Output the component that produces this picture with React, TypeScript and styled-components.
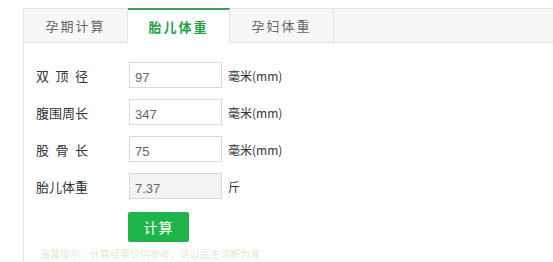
import React from "react";
import styled, { createGlobalStyle } from "styled-components";

const GlobalStyle = createGlobalStyle`
  html, body {
    margin: 0;
    padding: 0;
    background: #fff;
    overflow: hidden;
  }
  body {
    font-family: "Noto Sans CJK SC", "Liberation Sans", sans-serif;
  }
`;

const Page = styled.div`
  width: 553px;
  height: 262px;
  padding: 8px 0 0 23px;
  box-sizing: border-box;
  overflow: hidden;
`;

const Panel = styled.div`
  width: 560px;
  border-left: 1px solid #e6e6e6;
  min-height: 260px;
`;

const TabBar = styled.div`
  display: flex;
  height: 35px;
  background: #f7f7f7;
  border-top: 1px solid #e4e4e4;
  border-bottom: 1px solid #e4e4e4;
  box-sizing: border-box;
`;

const Tab = styled.div<{ $active?: boolean }>`
  width: ${(p) => (p.$active ? "102px" : "104px")};
  display: flex;
  align-items: center;
  justify-content: center;
  font-size: 13px;
  letter-spacing: 2px;
  color: ${(p) => (p.$active ? "#22a146" : "#666")};
  font-weight: ${(p) => (p.$active ? 700 : 400)};
  background: ${(p) => (p.$active ? "#fff" : "transparent")};
  border-right: 1px solid #e4e4e4;
  border-top: ${(p) => (p.$active ? "2px solid #3a9d55" : "none")};
  margin-top: ${(p) => (p.$active ? "-1px" : "0")};
  height: ${(p) => (p.$active ? "35px" : "33px")};
  box-sizing: border-box;
  padding-bottom: ${(p) => (p.$active ? "1px" : "0")};
`;

const Form = styled.div`
  display: flex;
  flex-direction: column;
  gap: 11px;
  padding: 19px 0 0 12px;
`;

const Row = styled.div`
  display: flex;
  align-items: center;
  height: 26px;
`;

const Label = styled.span`
  width: 93px;
  font-size: 13px;
  color: #333;
`;

const LabelText = styled.span`
  display: inline-block;
  width: 52px;
  text-align: justify;
  text-align-last: justify;
`;

const Field = styled.input<{ $readonly?: boolean }>`
  width: 93px;
  height: 26px;
  box-sizing: border-box;
  border: 1px solid #d9d9d9;
  background: ${(p) => (p.$readonly ? "#f2f2f2" : "#fff")};
  padding: 4px 0 0 5px;
  font-size: 13px;
  color: #666;
  font-family: "Liberation Sans", sans-serif;
  outline: none;
`;

const Unit = styled.span`
  margin-left: 6px;
  font-size: 12px;
  color: #333;
`;

const ButtonRow = styled.div`
  padding: 2px 0 0 92px;
`;

const CalcButton = styled.button`
  width: 61px;
  height: 30px;
  border: none;
  border-radius: 2px;
  background: #1fb44c;
  color: #fff;
  font-size: 14px;
  letter-spacing: 1px;
  font-family: "Noto Sans CJK SC", sans-serif;
  cursor: pointer;
`;

const Footnote = styled.div`
  margin: 6px 0 0 16px;
  font-size: 10px;
  line-height: 12px;
  color: #e4ecd6;
`;

const rows = [
  { label: "双顶径", value: "97", unit: "毫米(mm)" },
  { label: "腹围周长", value: "347", unit: "毫米(mm)" },
  { label: "股骨长", value: "75", unit: "毫米(mm)" },
];

export default function App() {
  return (
    <Page>
      <GlobalStyle />
      <Panel>
        <TabBar>
          <Tab>孕期计算</Tab>
          <Tab $active>胎儿体重</Tab>
          <Tab>孕妇体重</Tab>
        </TabBar>
        <Form>
          {rows.map((r) => (
            <Row key={r.label}>
              <Label>
                <LabelText>{r.label}</LabelText>
              </Label>
              <Field defaultValue={r.value} />
              <Unit>{r.unit}</Unit>
            </Row>
          ))}
          <Row>
            <Label>
              <LabelText>胎儿体重</LabelText>
            </Label>
            <Field $readonly readOnly defaultValue="7.37" />
            <Unit>斤</Unit>
          </Row>
          <ButtonRow>
            <CalcButton>计算</CalcButton>
          </ButtonRow>
        </Form>
        <Footnote>温馨提示：计算结果仅供参考，请以医生诊断为准</Footnote>
      </Panel>
    </Page>
  );
}
